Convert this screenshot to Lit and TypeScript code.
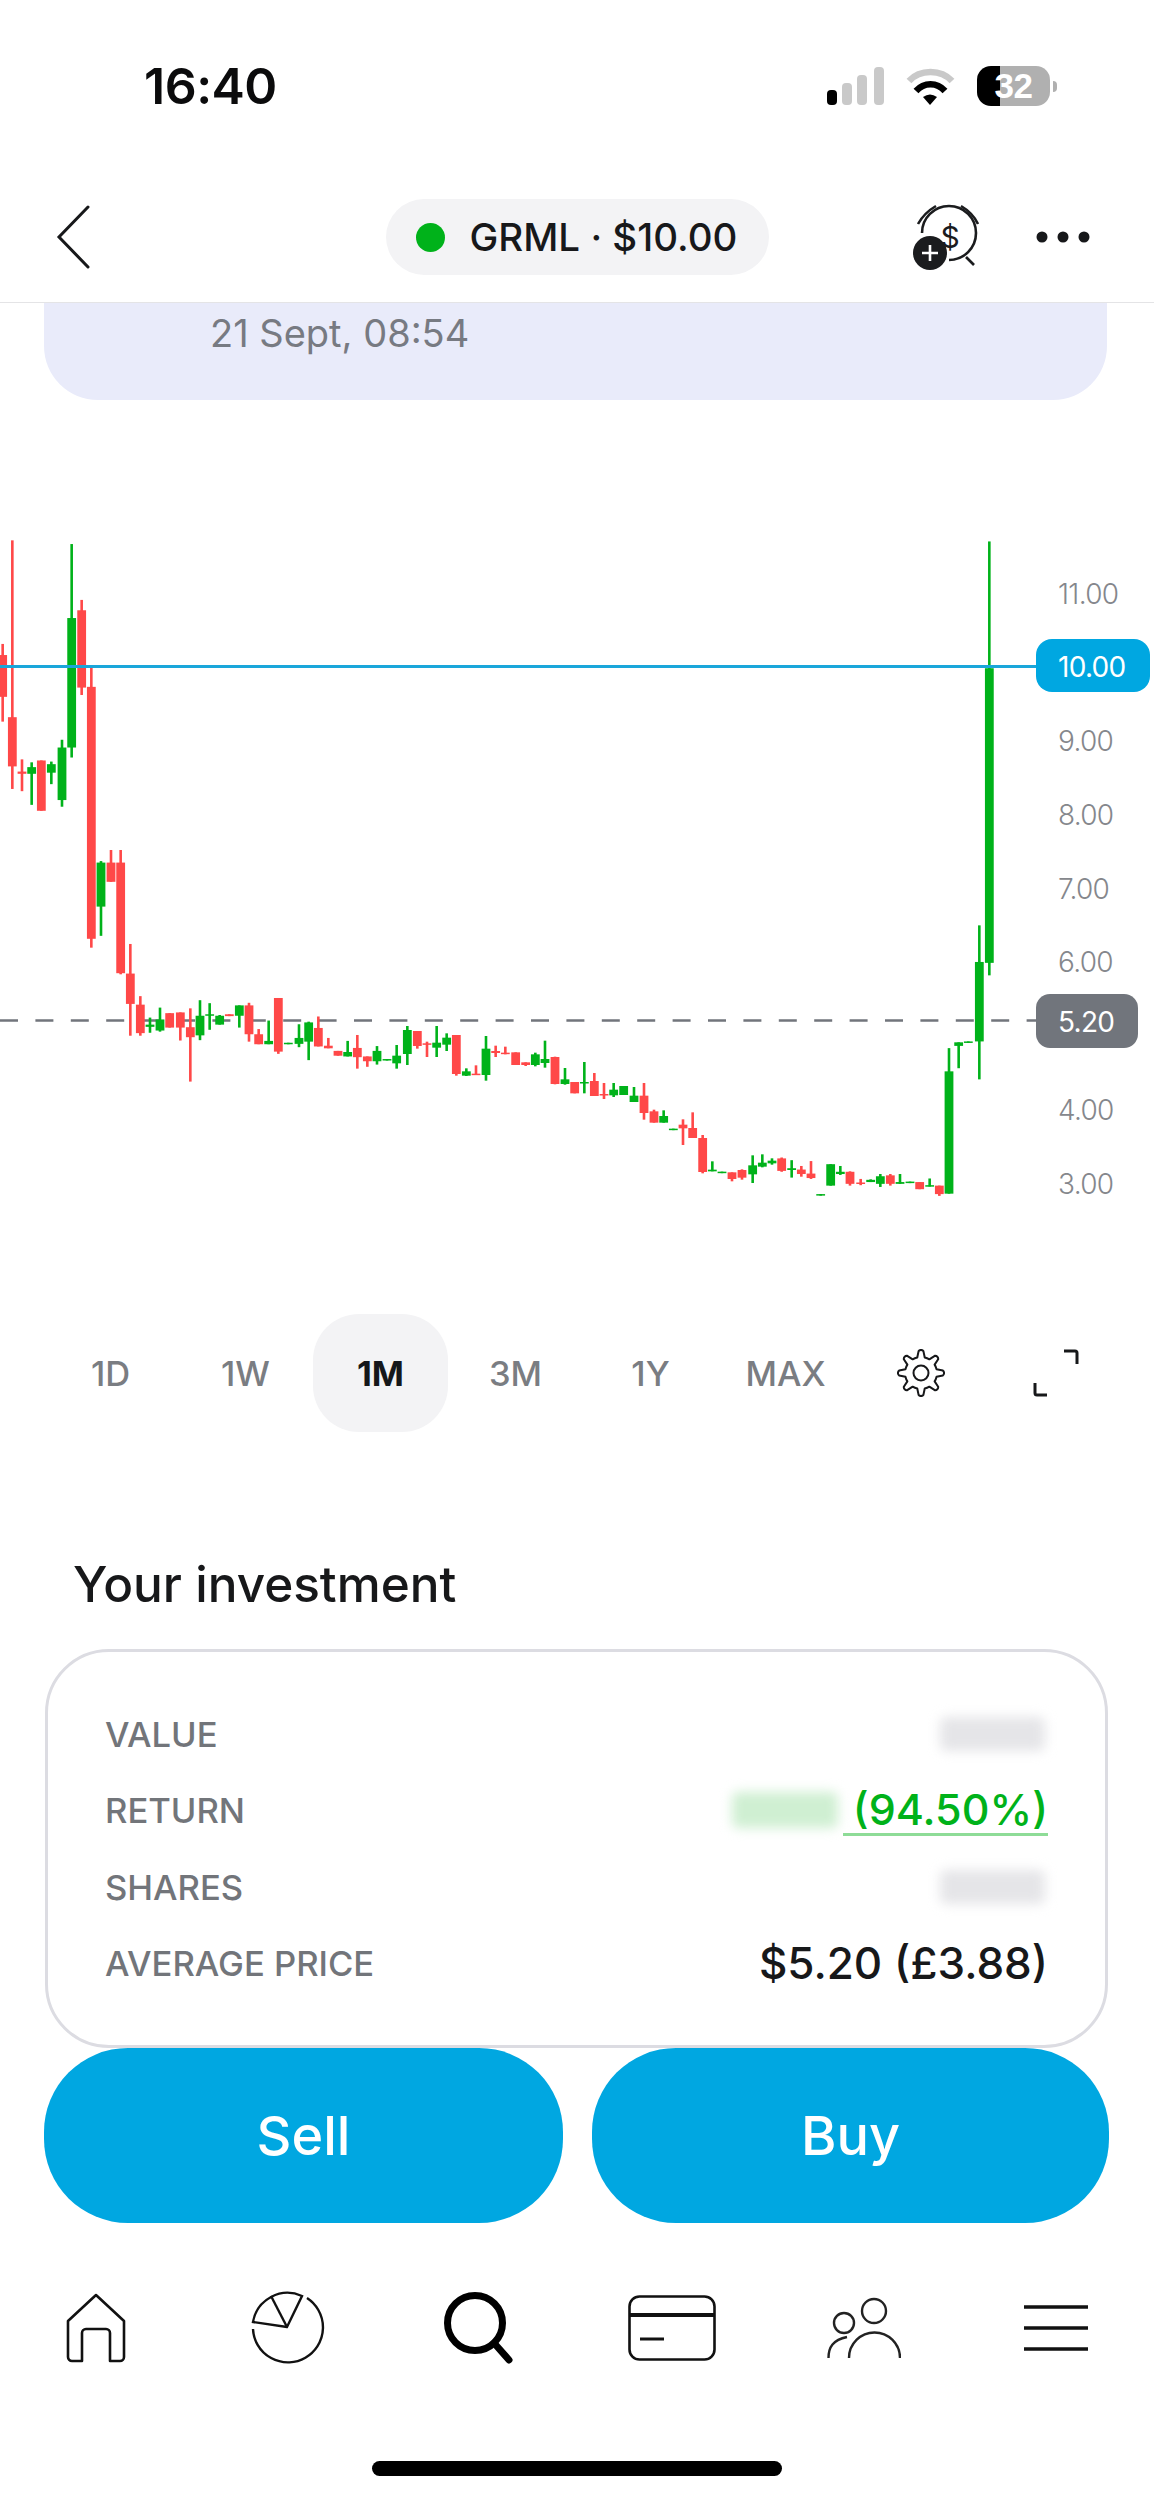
import { LitElement, html, css, svg } from "lit";
import { customElement } from "lit/decorators.js";

type Candle = [string, number, number, number, number, number];

const GREEN = "#00b21a";
const RED = "#ff4848";
const BLUE = "#00a7e1";

// candles read off the reference in three crops, each with its own scale
const left: Candle[] = [
  ["r", 8, 335, 545, 365, 478], ["r", 37, 55, 727, 533, 666], ["r", 66, 647, 733, 680, 686],
  ["g", 95, 655, 770, 668, 686], ["r", 124, 650, 786, 650, 786], ["g", 154, 653, 714, 660, 683],
  ["g", 186, 594, 775, 615, 757], ["g", 215, 65, 642, 265, 615], ["r", 245, 216, 473, 244, 453],
  ["r", 274, 400, 1156, 451, 1132], ["g", 303, 922, 1124, 926, 1045], ["r", 333, 892, 978, 926, 978],
  ["r", 362, 892, 1228, 926, 1225], ["r", 391, 1146, 1394, 1226, 1308], ["r", 421, 1287, 1394, 1310, 1387],
  ["g", 450, 1345, 1386, 1364, 1370], ["g", 480, 1318, 1383, 1350, 1380], ["r", 509, 1333, 1372, 1333, 1372],
  ["r", 541, 1331, 1407, 1331, 1372], ["r", 571, 1320, 1518, 1371, 1398], ["g", 600, 1298, 1406, 1340, 1393],
  ["g", 629, 1306, 1378, 1336, 1340], ["g", 659, 1338, 1364, 1340, 1364], ["r", 688, 1336, 1341, 1336, 1341],
  ["g", 718, 1312, 1372, 1312, 1340], ["r", 747, 1305, 1410, 1312, 1390], ["r", 776, 1376, 1417, 1390, 1417],
  ["g", 806, 1353, 1417, 1408, 1417], ["r", 835, 1292, 1443, 1292, 1437], ["g", 865, 1413, 1416, 1413, 1416],
  ["g", 897, 1363, 1425, 1400, 1416], ["g", 926, 1356, 1460, 1358, 1410], ["r", 955, 1342, 1423, 1373, 1423],
  ["r", 985, 1400, 1428, 1421, 1428], ["r", 1014, 1435, 1448, 1435, 1448], ["g", 1043, 1408, 1450, 1438, 1450],
  ["r", 1072, 1392, 1483, 1427, 1452], ["r", 1102, 1450, 1478, 1450, 1463], ["g", 1131, 1422, 1472, 1435, 1463],
  ["g", 1161, 1457, 1460, 1457, 1460],
];

const middle: Candle[] = [
  ["g", 50, 255, 326, 287, 310], ["g", 82, 198, 315, 210, 282], ["r", 112, 213, 266, 213, 258],
  ["r", 141, 245, 291, 250, 254], ["g", 170, 198, 291, 248, 263], ["g", 200, 220, 273, 233, 254],
  ["r", 229, 225, 347, 225, 342], ["g", 259, 325, 348, 334, 347], ["r", 288, 316, 344, 341, 344],
  ["g", 318, 228, 362, 266, 345], ["r", 347, 257, 291, 273, 279], ["r", 376, 260, 283, 278, 282],
  ["r", 407, 277, 315, 277, 315], ["r", 437, 307, 318, 307, 315], ["g", 466, 278, 319, 283, 315],
  ["g", 495, 242, 323, 297, 309], ["r", 525, 290, 373, 291, 372], ["g", 555, 324, 374, 358, 372],
  ["r", 584, 366, 400, 366, 400], ["g", 613, 306, 400, 366, 368], ["r", 643, 339, 408, 363, 408],
  ["r", 672, 369, 417, 402, 406], ["g", 701, 369, 411, 389, 406], ["g", 731, 378, 405, 378, 405],
  ["g", 762, 381, 426, 407, 426], ["r", 792, 369, 479, 407, 459], ["r", 822, 449, 488, 454, 488],
  ["g", 851, 451, 488, 468, 488], ["g", 880, 506, 509, 506, 509], ["r", 909, 478, 555, 494, 505],
  ["r", 938, 457, 534, 504, 534], ["r", 968, 525, 640, 534, 636], ["g", 997, 604, 634, 629, 634],
  ["g", 1026, 635, 638, 635, 638], ["r", 1056, 637, 664, 637, 657], ["r", 1086, 628, 659, 630, 653],
  ["g", 1118, 586, 669, 616, 643], ["g", 1147, 583, 622, 608, 620], ["g", 1176, 595, 614, 602, 610],
];

const right: Candle[] = [
  ["r", 65, 1428, 1460, 1430, 1458], ["g", 95, 1434, 1473, 1452, 1456], ["r", 124, 1447, 1471, 1455, 1465],
  ["r", 153, 1436, 1476, 1464, 1474], ["g", 182, 1510, 1512, 1510, 1512], ["g", 212, 1443, 1491, 1443, 1491],
  ["g", 241, 1447, 1467, 1460, 1465], ["r", 270, 1459, 1491, 1460, 1487], ["r", 302, 1476, 1490, 1484, 1487],
  ["g", 332, 1477, 1483, 1478, 1483], ["g", 361, 1465, 1494, 1470, 1487], ["r", 391, 1465, 1491, 1468, 1487],
  ["g", 420, 1465, 1487, 1483, 1487], ["g", 450, 1482, 1484, 1482, 1484], ["r", 479, 1483, 1499, 1483, 1499],
  ["g", 509, 1475, 1493, 1490, 1493], ["r", 538, 1491, 1514, 1491, 1510], ["g", 567, 1183, 1509, 1235, 1509],
  ["g", 596, 1170, 1228, 1170, 1178], ["g", 625, 1168, 1170, 1168, 1170], ["g", 658, 908, 1253, 990, 1168],
  ["g", 688, 48, 1020, 332, 992],
];

const axis: [string, number][] = [
  ["11.00", 74], ["9.00", 221], ["8.00", 295], ["7.00", 369], ["6.00", 442], ["4.00", 590], ["3.00", 664],
];

const ranges = ["1D", "1W", "1M", "3M", "1Y", "MAX"];

function candleRects(list: Candle[], x0: number, y0: number, sy: number) {
  return list.map(([c, cx, top, bot, bTop, bBot]) => {
    const x = x0 + cx / 3;
    const wickY = y0 + top / sy;
    const bodyY = y0 + bTop / sy;
    const fill = c === "g" ? GREEN : RED;
    return svg`
      <rect x=${x - 1.3} y=${wickY} width="2.6" height=${Math.max((bot - top) / sy, 1.5)} fill=${fill}></rect>
      <rect x=${x - 4.4} y=${bodyY} width="8.8" height=${Math.max((bBot - bTop) / sy, 1.5)} fill=${fill}></rect>`;
  });
}

function gearPath(cx: number, cy: number, outer: number, inner: number, teeth: number) {
  const pts: string[] = [];
  const step = (Math.PI * 2) / teeth;
  for (let i = 0; i < teeth; i++) {
    const a = i * step - Math.PI / 2;
    const p = (r: number, d: number) =>
      `${(cx + r * Math.cos(a + d)).toFixed(2)} ${(cy + r * Math.sin(a + d)).toFixed(2)}`;
    pts.push(`${i ? "L" : "M"}${p(inner, -step * 0.3)}`);
    pts.push(`L${p(outer, -step * 0.14)}`);
    pts.push(`A3 3 0 0 1 ${p(outer, step * 0.14)}`);
    pts.push(`L${p(inner, step * 0.3)}`);
    pts.push(`A${inner} ${inner} 0 0 1 ${p(inner, step * 0.7)}`);
  }
  return pts.join(" ") + "Z";
}

@customElement("app-root")
export class AppRoot extends LitElement {
  static styles = css`
    :host {
      display: block;
      width: 1154px;
      height: 2500px;
      overflow: hidden;
      background: #fff;
      font-family: Inter, "Liberation Sans", sans-serif;
      color: #17181a;
    }
    svg {
      display: block;
    }
    .status {
      height: 172px;
      display: flex;
      align-items: center;
      padding-left: 144px;
    }
    .time {
      font-size: 50px;
      font-weight: 600;
      letter-spacing: -0.5px;
      color: #0b0b0c;
      width: 683px;
    }
    .status-icons {
      display: flex;
      align-items: center;
      gap: 22px;
    }
    .battery {
      display: flex;
      align-items: center;
      gap: 3px;
    }
    .battery-body {
      width: 73px;
      height: 40px;
      border-radius: 14px;
      background: linear-gradient(90deg, #000 31%, #b0b0b0 31%);
      color: #fff;
      font-size: 35px;
      font-weight: 700;
      letter-spacing: -0.5px;
      display: flex;
      align-items: center;
      justify-content: center;
      font-family: "Liberation Sans", sans-serif;
    }
    .battery-nub {
      width: 4px;
      height: 11px;
      border-radius: 0 4px 4px 0;
      background: #b0b0b0;
    }
    .header {
      height: 130px;
      border-bottom: 1px solid #e4e4e6;
      display: grid;
      grid-template-columns: 1fr auto 1fr;
      align-items: center;
      padding: 0 60px;
    }
    .back {
      margin-left: -4px;
    }
    .pill {
      height: 76px;
      width: 383px;
      box-sizing: border-box;
      border-radius: 38px;
      background: #f3f3f5;
      display: flex;
      align-items: center;
      gap: 25px;
      padding-left: 30px;
      font-size: 38.5px;
      font-weight: 500;
      white-space: nowrap;
    }
    .dot {
      width: 29px;
      height: 29px;
      border-radius: 50%;
      background: #00b21a;
    }
    .header-right {
      display: flex;
      align-items: center;
      justify-content: flex-end;
      gap: 50px;
      margin-right: 4px;
    }
    .notice {
      height: 97px;
      margin: 0 47px 0 44px;
      box-sizing: border-box;
      padding: 7px 0 0 166px;
      background: #e9ebfa;
      border-radius: 0 0 54px 54px;
      color: #777a82;
      font-size: 38px;
    }
    .chart {
      margin-top: 120px;
      height: 700px;
    }
    .chart text {
      font-family: Inter, "Liberation Sans", sans-serif;
      font-size: 28px;
      font-weight: 300;
      letter-spacing: -0.7px;
      dominant-baseline: central;
      fill: #85878c;
    }
    .chart text.on-tag {
      fill: #fff;
      font-weight: 400;
    }
    .ranges {
      margin-top: 94px;
      height: 118px;
      padding-left: 43px;
      display: grid;
      grid-template-columns: repeat(8, 135px);
    }
    .range {
      display: flex;
      align-items: center;
      justify-content: center;
      font-size: 34.5px;
      font-weight: 500;
      color: #7a7d82;
    }
    .range.active {
      color: #15171a;
      font-weight: 700;
      background: #f3f3f5;
      border-radius: 46px;
    }
    .title {
      margin: 0;
      height: 217px;
      box-sizing: border-box;
      padding: 125px 0 0 73px;
      font-size: 49.5px;
      line-height: 54px;
      font-weight: 500;
    }
    .summary {
      height: 399px;
      margin: 0 46px 0 45px;
      box-sizing: border-box;
      padding: 0 57px;
      border: 3px solid #dcdce2;
      border-radius: 64px;
      display: flex;
      flex-direction: column;
      justify-content: center;
    }
    .row {
      height: 76.5px;
      display: flex;
      align-items: center;
      justify-content: space-between;
      font-size: 34.6px;
      font-weight: 500;
      color: #72757a;
    }
    .row-value {
      display: flex;
      align-items: center;
      font-size: 44px;
      font-weight: 500;
      color: #17181a;
    }
    .blur {
      width: 105px;
      height: 34px;
      margin-right: 3px;
      background: #e5e5e8;
      filter: blur(6px);
      border-radius: 6px;
    }
    .blur.gain {
      width: 106px;
      height: 36px;
      background: #cfefd2;
      margin-right: 5px;
    }
    .gain-text {
      color: #00b21a;
      font-size: 43px;
      padding-left: 10px;
      border-bottom: 3px solid #8edc97;
      line-height: 48px;
    }
    .actions {
      margin: 0 46px 0 44px;
      display: grid;
      grid-template-columns: 519px 517px;
      gap: 29px;
    }
    .action {
      height: 175px;
      border-radius: 84px;
      background: #00a7e1;
      color: #fff;
      font-size: 54px;
      font-weight: 500;
      display: flex;
      align-items: center;
      justify-content: center;
    }
    .nav {
      height: 209px;
      display: grid;
      grid-template-columns: repeat(6, 192px);
      align-items: center;
      justify-items: center;
    }
    .home-bar {
      width: 410px;
      height: 15px;
      margin: 29px auto 0;
      border-radius: 8px;
      background: #000;
    }
  `;

  renderChart() {
    return html`
      <svg class="chart-svg" width="1154" height="700" viewBox="0 0 1154 700">
        <line x1="0" y1="500.5" x2="1036" y2="500.5" stroke="#72757c" stroke-width="2.6" stroke-dasharray="18 17.4"></line>
        ${candleRects(left, 0, 0, 2.703)}
        ${candleRects(middle, 380, 440, 3)}
        ${candleRects(right, 760, 0, 2.24)}
        <line x1="0" y1="146.5" x2="1036" y2="146.5" stroke="#1aa6da" stroke-width="2.8"></line>
        ${axis.map(([label, y]) => svg`<text x="1058" y=${y}>${label}</text>`)}
        <rect x="1036" y="119" width="114" height="53" rx="16" fill=${BLUE}></rect>
        <text class="on-tag" x="1058" y="147">10.00</text>
        <rect x="1036" y="474" width="102" height="54" rx="14" fill="#71757c"></rect>
        <text class="on-tag" x="1058" y="502">5.20</text>
      </svg>
    `;
  }

  render() {
    return html`
      <div class="status">
        <div class="time">16:40</div>
        <div class="status-icons">
          <svg width="57" height="38" viewBox="0 0 57 38">
            <rect x="0" y="23" width="10" height="15" rx="4" fill="#000"></rect>
            <rect x="15" y="16" width="10" height="22" rx="4" fill="#c9c9c9"></rect>
            <rect x="30" y="8" width="10" height="30" rx="4" fill="#c9c9c9"></rect>
            <rect x="47" y="0" width="10" height="38" rx="4" fill="#c9c9c9"></rect>
          </svg>
          <svg width="49" height="37" viewBox="0 0 49 37">
            <path d="M3 13C14 1 35 1 46 13" fill="none" stroke="#c9c9c9" stroke-width="6.5"></path>
            <path d="M10 23C18 14 31 14 39 23" fill="none" stroke="#000" stroke-width="6.5"></path>
            <path d="M17 29Q24 24 31 29L24 37Z" fill="#000"></path>
          </svg>
          <div class="battery">
            <div class="battery-body">32</div>
            <div class="battery-nub"></div>
          </div>
        </div>
      </div>

      <div class="header">
        <svg class="back" width="36" height="66" viewBox="0 0 36 66">
          <path d="M32 3L3 33L32 63" fill="none" stroke="#17181a" stroke-width="3" stroke-linecap="round"></path>
        </svg>
        <div class="pill"><span class="dot"></span>GRML · $10.00</div>
        <div class="header-right">
          <svg width="80" height="70" viewBox="0 0 80 70" fill="none" stroke="#1b1c1e" stroke-width="2.6">
            <path d="M16 31A27 27 0 1 1 43 58"></path>
            <path d="M12 22Q18 11 30 4M55 4Q67 11 72 22"></path>
            <path d="M60 55L68 63"></path>
            <text x="44" y="46" text-anchor="middle" font-size="30" font-weight="400" fill="#1b1c1e" stroke="none">$</text>
            <circle cx="24" cy="51" r="17" fill="#1b1c1e" stroke="none"></circle>
            <path d="M16 51H32M24 43V59" stroke="#fff"></path>
          </svg>
          <svg width="54" height="12" viewBox="0 0 54 12" fill="#17181a">
            <circle cx="6" cy="6" r="5.5"></circle>
            <circle cx="27" cy="6" r="5.5"></circle>
            <circle cx="48" cy="6" r="5.5"></circle>
          </svg>
        </div>
      </div>

      <div class="notice">21 Sept, 08:54</div>

      <div class="chart">${this.renderChart()}</div>

      <div class="ranges">
        ${ranges.map((r) => html`<div class="range ${r === "1M" ? "active" : ""}">${r}</div>`)}
        <div class="range">
          <svg width="48" height="48" viewBox="0 0 48 48">
            <path d=${gearPath(24, 24, 22, 16, 8)} fill="none" stroke="#17181a" stroke-width="2" stroke-linejoin="round"></path>
            <circle cx="24" cy="24" r="7.5" fill="none" stroke="#17181a" stroke-width="2"></circle>
          </svg>
        </div>
        <div class="range">
          <svg width="46" height="48" viewBox="0 0 46 48" fill="none" stroke="#17181a" stroke-width="3">
            <path d="M31 2H42a2 2 0 0 1 2 2V15"></path>
            <path d="M2 34V44a2 2 0 0 0 2 2H14"></path>
          </svg>
        </div>
      </div>

      <h2 class="title">Your investment</h2>

      <div class="summary">
        <div class="row"><span>VALUE</span><div class="blur"></div></div>
        <div class="row">
          <span>RETURN</span>
          <div class="row-value"><div class="blur gain"></div><span class="gain-text">(94.50%)</span></div>
        </div>
        <div class="row"><span>SHARES</span><div class="blur"></div></div>
        <div class="row"><span>AVERAGE PRICE</span><div class="row-value">$5.20 (£3.88)</div></div>
      </div>

      <div class="actions">
        <div class="action">Sell</div>
        <div class="action">Buy</div>
      </div>

      <nav class="nav">
        <svg width="60" height="70" viewBox="0 0 60 70" fill="none" stroke="#111" stroke-width="2.6" stroke-linejoin="round">
          <path d="M2 28L30 2L58 28V64a4 4 0 0 1-4 4H44V40a4 4 0 0 0-4-4H20a4 4 0 0 0-4 4V68H6a4 4 0 0 1-4-4Z"></path>
        </svg>
        <svg width="75" height="75" viewBox="0 0 75 75" fill="none" stroke="#111" stroke-width="2.4">
          <path d="M56 8A35 35 0 1 1 2 39"></path>
          <path d="M36 37L2 32A35 35 0 0 1 51 6Z"></path>
          <path d="M36 37L20 6"></path>
        </svg>
        <svg width="72" height="72" viewBox="0 0 72 72" fill="none" stroke="#000" stroke-width="7" stroke-linecap="round">
          <circle cx="31" cy="31" r="27.5"></circle>
          <path d="M50 51L65 68"></path>
        </svg>
        <svg width="88" height="66" viewBox="0 0 88 66" fill="none" stroke="#111" stroke-width="2.6">
          <rect x="1.5" y="1.5" width="85" height="63" rx="10"></rect>
          <path d="M1.5 20H86.5" stroke-width="4"></path>
          <path d="M12 44H36" stroke-width="3"></path>
        </svg>
        <svg width="74" height="62" viewBox="0 0 74 62" fill="none" stroke="#222" stroke-width="2.4">
          <circle cx="47" cy="14" r="12"></circle>
          <circle cx="17" cy="26" r="10"></circle>
          <path d="M22 61A25.5 25.5 0 0 1 73 61"></path>
          <path d="M1.5 61C1.5 50 6 43 20 40"></path>
        </svg>
        <svg width="64" height="46" viewBox="0 0 64 46" stroke="#111" stroke-width="3.4">
          <path d="M0 2H64M0 23H64M0 44H64"></path>
        </svg>
      </nav>

      <div class="home-bar"></div>
    `;
  }
}
